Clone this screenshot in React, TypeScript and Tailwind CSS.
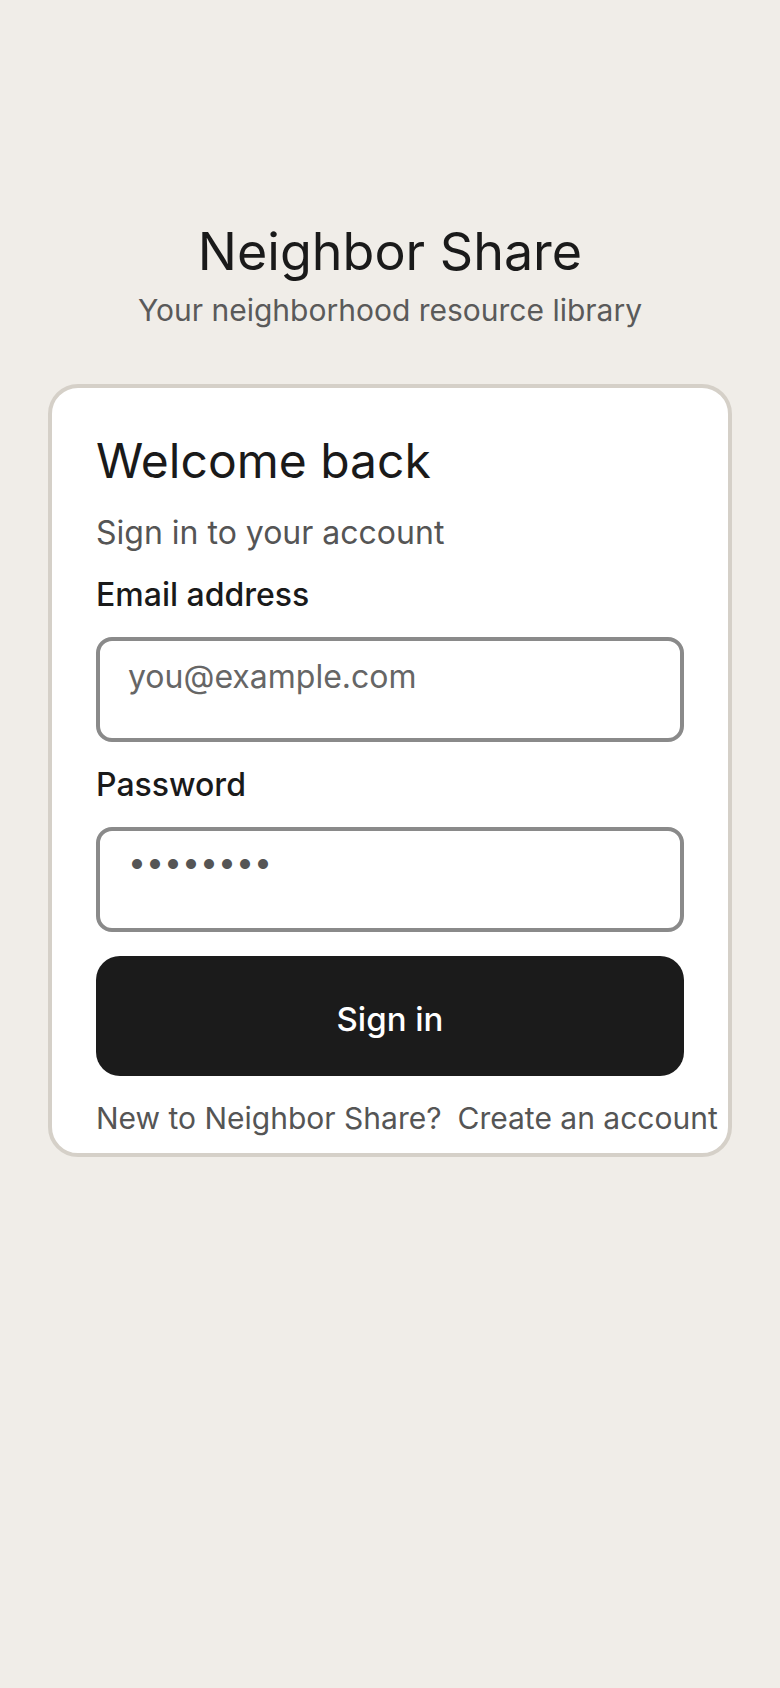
import React from 'react';

export default function App() {
  return (
    <div
      className="min-h-screen bg-[#f0ede8] px-[48px] pt-[220px]"
      style={{ fontFamily: 'Inter, "Noto Sans", sans-serif' }}
    >
      {/* Brand header */}
      <div className="flex flex-col items-center">
        <h1 className="text-[52px] leading-[64px] font-normal text-[#1a1a1a]">Neighbor Share</h1>
        <p className="mt-[6px] text-[30px] leading-[40px] text-[#5a5a5a]">
          Your neighborhood resource library
        </p>
      </div>

      {/* Sign-in card */}
      <form
        onSubmit={(e) => e.preventDefault()}
        className="mt-[54px] flex flex-col rounded-[30px] border-[4px] border-[#d5d0c8] bg-white px-[44px] pt-[45px] pb-[11px]"
      >
        <h2 className="text-[48px] leading-[56px] font-normal text-[#1a1a1a]">Welcome back</h2>
        <p className="mt-[20px] text-[32px] leading-[48px] text-[#555555]">Sign in to your account</p>

        <label htmlFor="email" className="mt-[14px] text-[32px] leading-[48px] font-medium text-[#1a1a1a]">
          Email address
        </label>
        <input
          id="email"
          type="email"
          placeholder="you@example.com"
          className="mt-[18px] w-full rounded-[16px] border-[4px] border-[#8a8a8a] bg-white pl-[28px] pr-[28px] pt-[16px] pb-[41px] text-[32px] leading-[40px] text-[#1a1a1a] outline-none placeholder:text-[#666666]"
        />

        <label htmlFor="password" className="mt-[19px] text-[32px] leading-[48px] font-medium text-[#1a1a1a]">
          Password
        </label>
        <input
          id="password"
          type="password"
          defaultValue="password"
          className="mt-[18px] w-full rounded-[16px] border-[4px] border-[#8a8a8a] bg-white pl-[28px] pr-[28px] pt-[11px] pb-[46px] text-[32px] leading-[40px] text-[#555555] outline-none"
        />

        <button
          type="submit"
          className="mt-[24px] flex h-[120px] w-full items-center justify-center rounded-[24px] bg-[#1b1b1b] pt-[5px] text-[33px] leading-[48px] font-medium text-white"
        >
          Sign in
        </button>

        <div className="mt-[18px] flex gap-[16px] whitespace-nowrap text-[30px] leading-[48px] text-[#555555]">
          <span>New to Neighbor Share?</span>
          <a href="#" className="text-[#555555]">
            Create an account
          </a>
        </div>
      </form>
    </div>
  );
}
